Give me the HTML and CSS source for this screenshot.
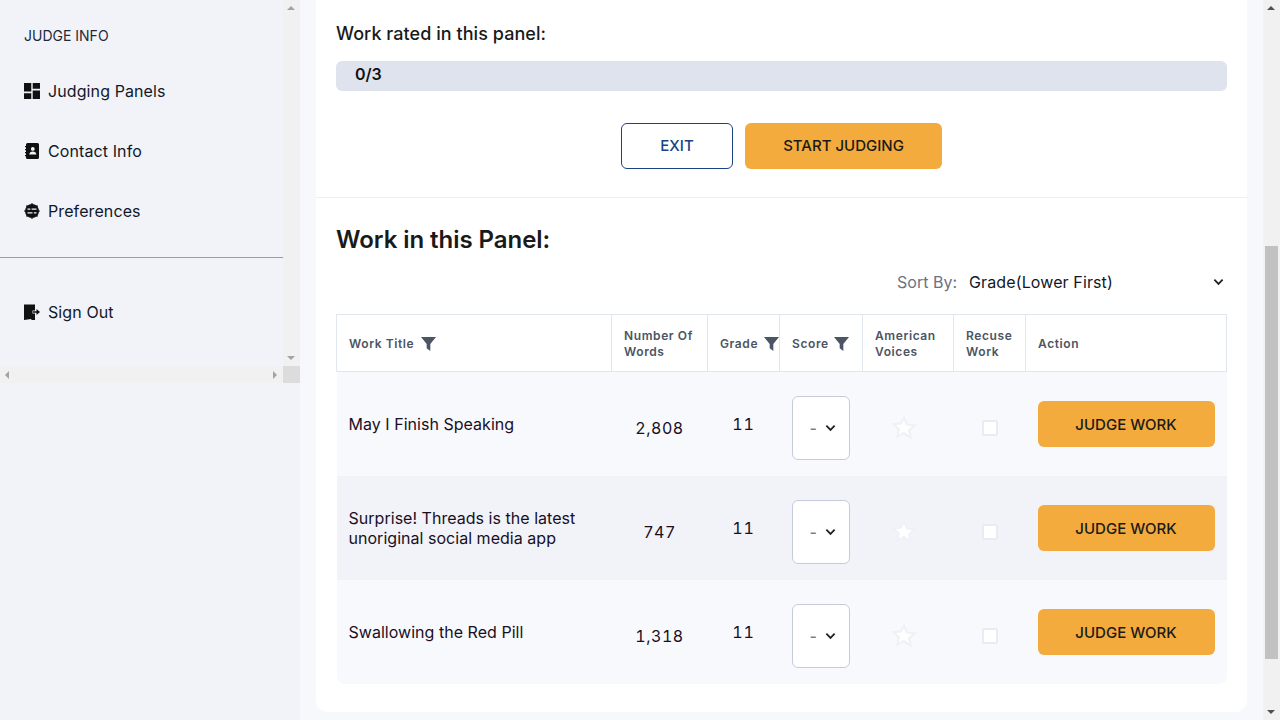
FILE: index.html
```html
<!DOCTYPE html>
<html lang="en">
<head>
    <meta charset="UTF-8">
    <title>Judging Panel</title>
    <link rel="stylesheet" href="styles.css">
</head>
<body>
    <div class="page">
        <!-- sidebar -->
        <aside class="sidebar">
            <div class="side-frame">
                <div class="side-content">
                    <div class="side-title">JUDGE INFO</div>
                    <a class="side-link">
                        <svg class="side-icon" viewBox="3 3 18 18"><path d="M3 12.500h8.200V3H3zM3 21h8.200v-6.500H3zM12.800 21H21v-9.500h-8.200zM12.800 3v6.500H21V3z"/></svg>
                        Judging Panels
                    </a>
                    <a class="side-link">
                        <svg class="side-icon" viewBox="0 0 16 16"><path fill-rule="evenodd" d="M3.500 0h10A1.500 1.500 0 0 1 15 1.500v13a1.500 1.500 0 0 1-1.500 1.500h-10A1.500 1.500 0 0 1 2 14.500v-13A1.500 1.500 0 0 1 3.500 0zM8.800 4a1.900 1.900 0 1 0 0 3.800 1.900 1.900 0 0 0 0-3.800zM5.300 11.500h7c0-1.900-1.500-3-3.500-3s-3.500 1.100-3.500 3z"/><path d="M1 3h2v1.200H1zM1 6h2v1.200H1zM1 9h2v1.200H1zM1 12h2v1.200H1z"/></svg>
                        Contact Info
                    </a>
                    <a class="side-link">
                        <svg class="side-icon" viewBox="0 0 16 16"><circle cx="8" cy="8" r="7"/><path d="M8 0l1.600 1.500H6.400zM8 16l1.600-1.500H6.400zM0 8l1.500 1.600V6.400zM16 8l-1.500 1.600V6.400zM2.300 2.300l2.300.1-2.200 2.200zM13.700 2.300l-.1 2.300-2.200-2.200zM2.300 13.700l.1-2.300 2.200 2.200zM13.700 13.700l-2.300-.1 2.200-2.200z"/><path class="icon-cut" d="M3.500 5.500h9v1.300h-9zM3.500 9.200h9v1.300h-9z"/><path d="M6.300 4.800h1.300v2.700H6.300zM8.500 8.500h1.300v2.700H8.500z"/></svg>
                        Preferences
                    </a>
                    <div class="side-rule"></div>
                    <a class="side-link side-signout">
                        <svg class="side-icon" viewBox="0 0 16 16"><path d="M0 .5h11v6H8.500v3H11V16H7.500l-.3-1L0 16z"/><path d="M9 7.300h3.500V5L16 8l-3.500 3V8.700H9z"/></svg>
                        Sign Out
                    </a>
                </div>
                <div class="vbar side-vbar">
                    <span class="arrow-up"></span>
                    <span class="arrow-down"></span>
                </div>
            </div>
            <div class="hbar">
                <span class="arrow-left"></span>
                <span class="arrow-right"></span>
                <span class="hbar-corner"></span>
            </div>
        </aside>

        <!-- main -->
        <main class="main">
            <div class="card">
                <section class="progress-box">
                    <h3 class="progress-title">Work rated in this panel:</h3>
                    <div class="progress-bar">0/3</div>
                    <div class="progress-actions">
                        <button class="btn btn-exit">EXIT</button>
                        <button class="btn btn-start">START JUDGING</button>
                    </div>
                </section>

                <section class="work-box">
                    <h2 class="work-title">Work in this Panel:</h2>
                    <div class="sort-row">
                        <span class="sort-label">Sort By:</span>
                        <div class="sort-select">
                            Grade(Lower First)
                            <svg class="chevron" viewBox="0 0 12 8"><path d="M1.500 1.500L6 6l4.500-4.500"/></svg>
                        </div>
                    </div>

                    <table class="work-table">
                        <thead>
                            <tr>
                                <th class="col-title">Work Title <svg class="filter filter-wide" viewBox="0 0 14 13"><path d="M0 0h14L8.700 6.500V13L5.300 10.500V6.500z"/></svg></th>
                                <th class="col-words">Number Of Words</th>
                                <th class="col-grade">Grade <svg class="filter" viewBox="0 0 14 13"><path d="M0 0h14L8.700 6.500V13L5.300 10.500V6.500z"/></svg></th>
                                <th class="col-score">Score <svg class="filter" viewBox="0 0 14 13"><path d="M0 0h14L8.700 6.500V13L5.300 10.500V6.500z"/></svg></th>
                                <th class="col-voices">American Voices</th>
                                <th class="col-recuse">Recuse Work</th>
                                <th class="col-action">Action</th>
                            </tr>
                        </thead>
                        <tbody>
                            <tr>
                                <td class="cell-title">May I Finish Speaking</td>
                                <td class="cell-words">2,808</td>
                                <td class="cell-grade">11</td>
                                <td class="cell-low"><div class="score-select"><span class="score-dash">-</span><svg class="chevron" viewBox="0 0 12 8"><path d="M1.500 1.500L6 6l4.500-4.500"/></svg></div></td>
                                <td class="cell-low"><svg class="star" viewBox="0 0 24 24"><path d="M12 2.500l2.900 6.300 6.900.8-5.100 4.700 1.400 6.800L12 16.700l-6.100 3.400 1.400-6.800-5.100-4.700 6.900-.8z"/></svg></td>
                                <td class="cell-low"><span class="check"></span></td>
                                <td class="cell-action"><button class="btn btn-judge">JUDGE WORK</button></td>
                            </tr>
                            <tr>
                                <td class="cell-title">Surprise! Threads is the latest unoriginal social media app</td>
                                <td class="cell-words">747</td>
                                <td class="cell-grade">11</td>
                                <td class="cell-low"><div class="score-select"><span class="score-dash">-</span><svg class="chevron" viewBox="0 0 12 8"><path d="M1.500 1.500L6 6l4.500-4.500"/></svg></div></td>
                                <td class="cell-low"><svg class="star" viewBox="0 0 24 24"><path d="M12 2.500l2.900 6.300 6.900.8-5.100 4.700 1.400 6.800L12 16.700l-6.100 3.400 1.400-6.800-5.100-4.700 6.900-.8z"/></svg></td>
                                <td class="cell-low"><span class="check"></span></td>
                                <td class="cell-action"><button class="btn btn-judge">JUDGE WORK</button></td>
                            </tr>
                            <tr>
                                <td class="cell-title">Swallowing the Red Pill</td>
                                <td class="cell-words">1,318</td>
                                <td class="cell-grade">11</td>
                                <td class="cell-low"><div class="score-select"><span class="score-dash">-</span><svg class="chevron" viewBox="0 0 12 8"><path d="M1.500 1.500L6 6l4.500-4.500"/></svg></div></td>
                                <td class="cell-low"><svg class="star" viewBox="0 0 24 24"><path d="M12 2.500l2.900 6.300 6.900.8-5.100 4.700 1.400 6.800L12 16.700l-6.100 3.400 1.400-6.800-5.100-4.700 6.900-.8z"/></svg></td>
                                <td class="cell-low"><span class="check"></span></td>
                                <td class="cell-action"><button class="btn btn-judge">JUDGE WORK</button></td>
                            </tr>
                        </tbody>
                    </table>
                </section>
            </div>
        </main>

        <div class="vbar page-vbar">
            <span class="arrow-up"></span>
            <span class="page-thumb"></span>
            <span class="arrow-down"></span>
        </div>
    </div>
</body>
</html>
```

FILE: styles.css
```css
* {
    box-sizing: border-box;
}

body {
    margin: 0;
    font-family: Inter, "Liberation Sans", sans-serif;
    color: #111827;
    background-color: #f7f8fc;
    overflow: hidden;
}

.page {
    display: flex;
    width: 1280px;
    height: 720px;
    overflow: hidden;
}

/* sidebar */
.sidebar {
    width: 300px;
    flex-shrink: 0;
    background-color: #f1f3f9;
}

.side-frame {
    display: flex;
    height: 366px;
}

.side-content {
    flex: 1;
    padding-top: 27px;
}

.side-title {
    padding-left: 24px;
    font-size: 14px;
    line-height: 17px;
    color: #1f2937;
    margin-bottom: 17px;
}

.side-link {
    display: flex;
    align-items: center;
    gap: 8px;
    height: 60px;
    padding-left: 24px;
    font-size: 16px;
    letter-spacing: 0.1px;
    color: #111827;
}

.side-icon {
    width: 16px;
    height: 16px;
    fill: #111;
    flex-shrink: 0;
}

.icon-cut {
    fill: #f1f3f9;
}

.side-rule {
    height: 1px;
    background-color: #9a9ca5;
    margin: 16px 0 24px;
}

.vbar {
    position: relative;
    width: 17px;
    flex-shrink: 0;
    background-color: #f1f1f1;
}

.arrow-up,
.arrow-down {
    position: absolute;
    left: 4px;
    width: 0;
    height: 0;
    border-left: 4px solid transparent;
    border-right: 4px solid transparent;
}

.arrow-up {
    top: 6px;
    border-bottom: 4px solid #a3a3a3;
}

.arrow-down {
    bottom: 6px;
    border-top: 4px solid #a3a3a3;
}

.hbar {
    position: relative;
    height: 17px;
    background-color: #f1f1f1;
}

.arrow-left,
.arrow-right {
    position: absolute;
    top: 5px;
    width: 0;
    height: 0;
    border-top: 4px solid transparent;
    border-bottom: 4px solid transparent;
}

.arrow-left {
    left: 5px;
    border-right: 4px solid #a3a3a3;
}

.arrow-right {
    left: 273px;
    border-left: 4px solid #a3a3a3;
}

.hbar-corner {
    position: absolute;
    right: 0;
    top: 0;
    width: 17px;
    height: 17px;
    background-color: #dcdcdc;
}

/* main */
.main {
    flex: 1;
    padding: 0 16px;
}

.page-vbar .arrow-up,
.page-vbar .arrow-down {
    border-top-color: #505050;
    border-bottom-color: #505050;
}

.page-thumb {
    position: absolute;
    left: 2px;
    top: 246px;
    width: 13px;
    height: 413px;
    background-color: #c1c1c1;
}

.card {
    height: 712px;
    background-color: #fff;
    border-radius: 0 0 12px 12px;
}

.progress-box {
    height: 198px;
    padding: 23px 20px 0;
    border-bottom: 1px solid #eceef2;
}

.progress-title {
    margin: 0 0 16px;
    font-size: 18px;
    line-height: 22px;
    font-weight: 500;
    letter-spacing: 0.05px;
    color: #1a1a1a;
}

.progress-bar {
    height: 30px;
    padding-left: 19px;
    background-color: #dfe3ee;
    border-radius: 6px;
    font-size: 16px;
    font-weight: 600;
    line-height: 27px;
    color: #111;
}

.progress-actions {
    display: flex;
    justify-content: center;
    gap: 12px;
    margin-top: 32px;
}

.btn {
    height: 46px;
    padding: 0 0 1px;
    border-radius: 6px;
    font-family: inherit;
    font-size: 15px;
    font-weight: 500;
}

.btn-exit {
    width: 112px;
    background-color: #fff;
    border: 1px solid #1a4384;
    color: #1a4384;
}

.btn-start {
    width: 197px;
    background-color: #f2ab3c;
    border: none;
    color: #1a1a1a;
}

.work-box {
    padding: 0 20px;
}

.work-title {
    margin: 0;
    padding-top: 27px;
    font-size: 24px;
    line-height: 29px;
    font-weight: 600;
    letter-spacing: -0.05px;
    color: #1a1a1a;
}

.sort-row {
    display: flex;
    justify-content: flex-end;
    align-items: center;
    height: 28px;
    margin-top: 14px;
    margin-bottom: 18px;
}

.sort-label {
    font-size: 16px;
    color: #6b7280;
}

.sort-select {
    display: flex;
    align-items: center;
    justify-content: space-between;
    width: 270px;
    padding: 0 3px 0 12px;
    font-size: 16px;
    letter-spacing: 0.12px;
    color: #111827;
}

.chevron {
    width: 11px;
    height: 8px;
    fill: none;
    stroke: #222;
    stroke-width: 2;
}

/* table */
.work-table {
    width: 891px;
    border-collapse: collapse;
    table-layout: fixed;
}

.work-table th {
    height: 57px;
    padding: 1px 12px 0;
    border: 1px solid #e2e6ee;
    text-align: left;
    font-size: 12px;
    line-height: 16px;
    font-weight: 600;
    letter-spacing: 0.6px;
    color: #4b5563;
}

.col-title { width: 275px; }
.col-words { width: 96px; }
.col-grade { width: 72px; white-space: nowrap; }
.col-score { width: 83px; white-space: nowrap; }
.col-voices { width: 91px; }
.col-recuse { width: 72px; }

.filter {
    width: 15px;
    height: 14px;
    fill: #4b5563;
    margin-left: 2px;
    vertical-align: -3px;
}

.filter-wide {
    margin-left: 3px;
}

.work-table td {
    height: 104px;
    padding: 0 12px;
    background-color: #f8f9fd;
    font-size: 16px;
    line-height: 20px;
    letter-spacing: 0.03px;
    color: #1a0f1f;
}

.work-table tr:nth-child(2) td {
    background-color: #f1f3f8;
}

.work-table tbody tr:last-child td:first-child {
    border-bottom-left-radius: 8px;
}

.work-table tbody tr:last-child td:last-child {
    border-bottom-right-radius: 8px;
}

.work-table .cell-words {
    padding-top: 8px;
    text-align: center;
    letter-spacing: 0.5px;
    font-variant-numeric: tabular-nums;
}

.work-table .cell-grade {
    text-align: center;
    letter-spacing: 1px;
    font-variant-numeric: tabular-nums;
}

.work-table .cell-low {
    padding-top: 8px;
}

.score-select {
    display: flex;
    align-items: center;
    gap: 8px;
    width: 58px;
    height: 64px;
    padding-left: 17px;
    background-color: #fff;
    border: 1px solid #c5cbdb;
    border-radius: 6px;
}

.score-dash {
    font-weight: 500;
    color: #7c7c88;
}

.star {
    display: block;
    width: 26px;
    height: 26px;
    margin-left: 16px;
    fill: #fff;
    stroke: #eef2f7;
    stroke-width: 2;
}

.check {
    display: block;
    width: 16px;
    height: 16px;
    margin: 0 auto;
    background-color: #fff;
    border: 2px solid #e8ebf2;
    border-radius: 2px;
}

.btn-judge {
    display: block;
    width: 177px;
    padding: 1px 0 0;
    background-color: #f2ab3c;
    border: none;
    color: #1a1a1a;
}
```
